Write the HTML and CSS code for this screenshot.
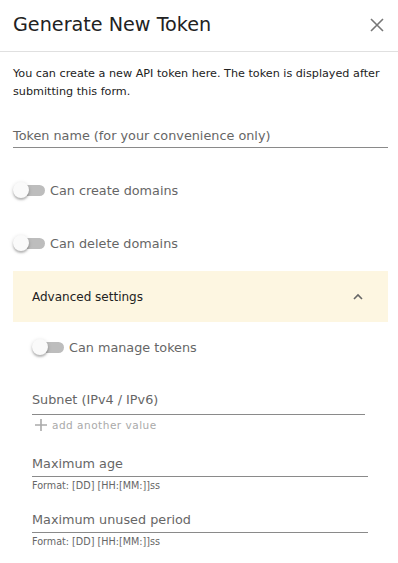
FILE: index.html
```html
<!DOCTYPE html>
<html lang="en">
<head>
  <meta charset="UTF-8">
  <meta name="viewport" content="width=device-width, initial-scale=1.0">
  <title>Generate New Token</title>
  <link rel="stylesheet" href="styles.css">
</head>
<body>
  <div class="token-dialog">
    <div class="dialog-header">
      <div class="dialog-title">Generate New Token</div>
      <div class="close-btn">
        <svg width="14" height="14" viewBox="0 0 14 14"><path d="M1 1L13 13M13 1L1 13" stroke="#777" stroke-width="1.6" fill="none"/></svg>
      </div>
    </div>
    <div class="dialog-body">
      <p class="intro">You can create a new API token here. The token is displayed after submitting this form.</p>

      <div class="text-field">
        <div class="field-label">Token name (for your convenience only)</div>
      </div>

      <div class="switch-row first">
        <div class="switch"><span class="knob"></span></div>
        <span class="switch-label">Can create domains</span>
      </div>
      <div class="switch-row">
        <div class="switch"><span class="knob"></span></div>
        <span class="switch-label">Can delete domains</span>
      </div>

      <div class="advanced">
        <div class="advanced-header">
          <span>Advanced settings</span>
          <svg width="12" height="8" viewBox="0 0 12 8"><path d="M2 6L6 2L10 6" stroke="#666" stroke-width="1.6" fill="none"/></svg>
        </div>
        <div class="advanced-body">
          <div class="switch-row">
            <div class="switch"><span class="knob"></span></div>
            <span class="switch-label">Can manage tokens</span>
          </div>

          <div class="text-field subnet">
            <div class="field-label">Subnet (IPv4 / IPv6)</div>
          </div>
          <div class="add-value">
            <svg width="14" height="14" viewBox="0 0 14 14"><path d="M7 1V13M1 7H13" stroke="#aaa" stroke-width="1.6"/></svg>
            <span>add another value</span>
          </div>

          <div class="text-field wide max-age">
            <div class="field-label">Maximum age</div>
          </div>
          <div class="hint">Format: [DD] [HH:[MM:]]ss</div>

          <div class="text-field wide max-unused">
            <div class="field-label">Maximum unused period</div>
          </div>
          <div class="hint">Format: [DD] [HH:[MM:]]ss</div>
        </div>
      </div>
    </div>
  </div>
</body>
</html>
```

FILE: styles.css
```css
/* Token dialog */
body {
  font-family: "DejaVu Sans", sans-serif;
  margin: 0;
  background: white;
  color: rgba(0, 0, 0, 0.87);
}
.token-dialog {
  width: 398px;
}
.dialog-header {
  display: flex;
  justify-content: space-between;
  align-items: center;
  height: 51px;
  padding: 0 13px;
  border-bottom: 1px solid #e0e0e0;
}
.dialog-title {
  font-size: 19.2px;
  color: #222;
  padding-bottom: 2px;
}
.close-btn {
  display: flex;
  margin-right: 1px;
  padding-bottom: 2px;
}
.dialog-body {
  padding: 0 10px 0 13px;
}
.intro {
  font-size: 11.2px;
  line-height: 18px;
  margin: 13px 0 0;
  color: #222;
}
.text-field {
  border-bottom: 1px solid #8a8a8a;
  height: 35px;
  display: flex;
  align-items: flex-end;
}
.dialog-body > .text-field {
  margin-top: 11px;
}
.field-label {
  font-size: 12.8px;
  color: #666;
  padding-bottom: 4px;
}
.advanced-body .field-label {
  padding-bottom: 7px;
}
.advanced-body .wide .field-label {
  padding-bottom: 5px;
}
.switch-row {
  display: flex;
  align-items: center;
  height: 20px;
  margin-top: 33px;
}
.switch-row.first {
  margin-top: 32px;
}
.switch {
  position: relative;
  width: 32px;
  height: 20px;
  margin-right: 5px;
  display: flex;
  align-items: center;
}
.switch::before {
  content: "";
  display: block;
  margin-left: 2px;
  width: 30px;
  height: 11px;
  border-radius: 6px;
  background: #bdbdbd;
}
.knob {
  position: absolute;
  left: 0;
  top: 2px;
  width: 16px;
  height: 16px;
  border-radius: 50%;
  background: #fafafa;
  box-shadow: 0 2px 2px rgba(0, 0, 0, 0.22), 0 1px 4px rgba(0, 0, 0, 0.14);
}
.switch-label {
  font-size: 12.8px;
  color: #666;
}
.advanced {
  margin-top: 18px;
}
.advanced-header {
  background: #fdf6e1;
  height: 51px;
  display: flex;
  justify-content: space-between;
  align-items: center;
  padding: 0 24px 0 19px;
  font-size: 12px;
  color: #222;
}
.advanced-body {
  padding: 0 20px 0 19px;
}
.advanced-body .switch-row {
  margin-top: 15px;
}
.text-field.subnet {
  margin-top: 22px;
  margin-right: 3px;
}
.text-field.max-age {
  margin-top: 9px;
}
.text-field.max-unused {
  margin-top: 4px;
}
.add-value {
  display: flex;
  align-items: center;
  gap: 4px;
  font-size: 10.5px;
  letter-spacing: 0.5px;
  color: #aaa;
  margin-top: 3px;
  padding-left: 2px;
}
.hint {
  font-size: 10.7px;
  font-family: "DejaVu Sans Condensed", "DejaVu Sans", sans-serif;
  font-stretch: condensed;
  color: #666;
  margin-top: 2px;
  height: 14px;
}
```
